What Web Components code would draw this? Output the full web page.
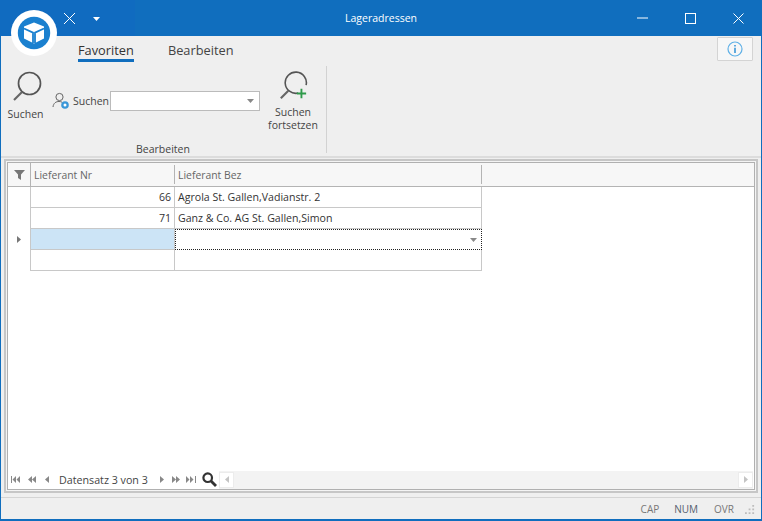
<!DOCTYPE html>
<html lang="de">
<head>
<meta charset="utf-8">
<title>Lageradressen</title>
<style>
html,body{margin:0;padding:0;width:762px;height:521px;overflow:hidden;background:#efefef}
body{font-family:"Open Sans","Noto Sans","Liberation Sans",sans-serif;font-size:10px}
</style>
</head>
<body>
<app-window>
  <title-bar title-text="Lageradressen"></title-bar>
  <ribbon-bar></ribbon-bar>
  <data-grid></data-grid>
  <status-bar></status-bar>
</app-window>
<script>
function def(name, html){
  customElements.define(name, class extends HTMLElement{
    constructor(){super();this.attachShadow({mode:'open'}).innerHTML=html;}
    connectedCallback(){
      const t=this.getAttribute('title-text');
      const el=this.shadowRoot.querySelector('[data-title]');
      if(t&&el)el.textContent=t;
    }
  });
}
def('app-window',`<style>
:host{display:flex;flex-direction:column;width:762px;height:521px;box-sizing:border-box;border:solid #106ebe;border-width:0 1px 2px 1px;background:#efefef;color:#444;position:relative}
</style><slot></slot>`);

def('title-bar',`<style>
:host{display:flex;align-items:center;height:36px;flex:none;background:linear-gradient(90deg,#106bc0 0,#106bc0 135px,#106ebe 135px);color:#fff;position:relative;margin:0 -1px}
.logo{position:absolute;left:11px;top:10px;width:46px;height:46px;z-index:3}
.qat{display:flex;align-items:center;position:absolute;left:63px;top:12px;gap:17px}
.title{flex:1;text-align:center;font-size:10.5px;line-height:36px}
.btns{position:absolute;right:0;top:0;display:flex}
.btns div{width:48px;height:36px;display:flex;align-items:center;justify-content:center}
svg{display:block}
</style>
<svg class="logo" viewBox="0 0 46 46"><circle cx="23" cy="23" r="23" fill="#fff"/><circle cx="23" cy="23" r="16.2" fill="#1a80cf"/>
<path d="M23 12.5 33 16.5V28.5L23 33.5 13 28.5V16.5Z" fill="#fff"/>
<path d="M13 18.5 22 22.6V33M33 18.5 24 22.6V33" fill="none" stroke="#1a80cf" stroke-width="1.8"/></svg>
<div class="qat">
<svg width="13" height="13" viewBox="0 0 13 13"><path d="M1 1 12 12M12 1 1 12" stroke="#fff" stroke-width="1" fill="none"/></svg>
<svg width="7" height="4" viewBox="0 0 7 4"><path d="M0 0H7L3.5 4Z" fill="#fff"/></svg>
</div>
<div class="title" data-title></div>
<div class="btns">
<div><svg width="11" height="2" viewBox="0 0 11 2"><path d="M0 1H11" stroke="#fff" stroke-width="1"/></svg></div>
<div><svg width="11" height="11" viewBox="0 0 11 11"><rect x=".5" y=".5" width="10" height="10" fill="none" stroke="#fff"/></svg></div>
<div><svg width="11" height="11" viewBox="0 0 11 11"><path d="M.5.5 10.5 10.5M10.5.5 .5 10.5" stroke="#fff" fill="none"/></svg></div>
</div>`);

def('ribbon-bar',`<style>
:host{display:block;flex:none;height:120px;border-bottom:2px solid #dcdcdc;box-sizing:content-box;position:relative}
.tabs{display:flex;height:30px;padding-left:77px;gap:34px;font-size:12.8px;color:#444}
.tab{padding-top:5px;height:21px;line-height:18px;box-sizing:content-box}
.tab.on{border-bottom:3px solid #106ebe;height:18px;color:#333}
.info{position:absolute;left:716px;top:1px;width:36px;height:24px;box-sizing:border-box;background:#f7f7f7;border:1px solid #d4d4d4;border-radius:1px;display:flex;align-items:center;justify-content:center}
.body{display:flex;height:87px}
.grp{display:flex;flex-direction:column;width:326px;border-right:1px solid #d2d2d2;box-sizing:border-box;height:87px}
.row{display:flex;height:66px;padding-top:5px;box-sizing:border-box}
.big{display:flex;flex-direction:column;align-items:center;font-size:10.5px;line-height:13px;color:#444}
.big svg{display:block;margin-bottom:5px}
.s1{width:51px}
.s1 div{margin-right:2px}
.mid{display:flex;align-items:center;height:22px;margin-top:19px;width:211px}
.mid span{margin:0 1px 0 3px;font-size:10.5px}
.combo{width:150px;height:20px;box-sizing:border-box;background:#fff;border:1px solid #bbb;display:flex;align-items:center;justify-content:flex-end;padding-right:5px}
.s2{width:60px;text-align:center}
.gl{text-align:center;font-size:10.5px;line-height:13px;margin-top:11px;color:#444;padding-right:1px}
svg{display:block}
</style>
<div class="tabs"><div class="tab on">Favoriten</div><div class="tab">Bearbeiten</div></div>
<div class="info"><svg width="16" height="16" viewBox="0 0 16 16"><circle cx="8" cy="8" r="7" fill="none" stroke="#5fb0e6" stroke-width="1.2"/><path d="M8 6.8V12M8 4V5.6" stroke="#3a97d8" stroke-width="1.6"/></svg></div>
<div class="body"><div class="grp">
<div class="row">
<div class="big s1"><svg width="32" height="32" viewBox="0 0 32 32"><circle cx="18.5" cy="12.5" r="11" fill="none" stroke="#555" stroke-width="1.7"/><path d="M11 21 3 29" stroke="#666" stroke-width="2.2"/></svg><div>Suchen</div></div>
<div class="mid"><svg width="18" height="18" viewBox="0 0 18 18"><circle cx="7.500" cy="5" r="3.600" fill="none" stroke="#666" stroke-width="1"/><path d="M1 15C1.500 11 4 9.500 7 9.500 8 9.500 9 9.700 10 10.200" fill="none" stroke="#666" stroke-width="1"/><circle cx="13" cy="13" r="3.800" fill="#3a97d8"/><circle cx="13" cy="13" r="1.500" fill="#fff"/></svg><span>Suchen</span><div class="combo"><svg width="7" height="4" viewBox="0 0 7 4"><path d="M0 0H7L3.500 4Z" fill="#888"/></svg></div></div>
<div class="big s2"><svg width="32" height="32" viewBox="0 0 32 32"><path d="M21.500 23.500A11.300 11.300 0 1 1 30 15" fill="none" stroke="#555" stroke-width="1.700"/><path d="M11 21 3 29" stroke="#666" stroke-width="2.200"/><path d="M25 19V29M20 24H30" stroke="#2f9a4a" stroke-width="2"/></svg><div>Suchen<br>fortsetzen</div></div>
</div>
<div class="gl">Bearbeiten</div>
</div></div>`);

def('data-grid',`<style>
:host{display:flex;flex-direction:column;flex:1;min-height:0;margin:1px 3px 4px 3px;border:2px solid #c6c6c6;background:#f4f4f4;padding:1px;box-sizing:border-box;font-size:10.6px;color:#444;position:relative}
.inner{flex:1;min-height:0;display:flex;flex-direction:column;border:1px solid #b0b0b0;background:#fff}
.table{flex:1;min-height:0}
.hdr{display:flex;height:24px;background:#f7f7f7;border-bottom:1px solid #b4b4b4;box-sizing:border-box;color:#666;font-size:10.4px}
.hc{display:flex;align-items:center;box-sizing:border-box;border-right:1px solid #b4b4b4;height:19px;margin-top:2px;padding-left:3px}
.ind{width:23px;justify-content:center;padding:0;height:23px;margin:0;border-right:1px solid #b4b4b4}
.c1{width:144px}.c2{width:307px}
.r{display:flex;height:21px;box-sizing:border-box}
.i{width:23px;display:flex;align-items:center;justify-content:center;border-right:1px solid #c8c8c8;box-sizing:border-box}
.d{border-right:1px solid #c8c8c8;border-bottom:1px solid #c8c8c8;box-sizing:border-box;display:flex;align-items:center;padding:0 3px;color:#333}
.n{justify-content:flex-end}
.sel{background:#cce4f6}
.ed{border:1px dotted #222;justify-content:flex-end;padding-right:4px}
.nav{display:flex;align-items:center;height:20px;margin-top:auto;color:#444}
.np{display:flex;align-items:center;width:211px;flex:none;box-sizing:border-box;padding-left:3px;height:20px}
.np svg{flex:none}
.np span{margin:1px 12px 0 10px;font-size:10.7px;white-space:nowrap}
.sb{flex:1;height:18px;margin:1px 1px 0 0;background:#f3f3f3;display:flex;justify-content:space-between}
.sb div{width:15px;height:16px;margin-top:1px;background:#fff;border:1px solid #ececec;box-sizing:border-box;display:flex;align-items:center;justify-content:center}
svg{display:block}
</style>
<div class="inner">
<div class="table">
<div class="hdr">
<div class="hc ind"><svg width="11" height="10" viewBox="0 0 11 10"><path d="M0 0H11L7 4.500V10L4 8V4.500Z" fill="#777"/></svg></div>
<div class="hc c1">Lieferant Nr</div><div class="hc c2">Lieferant Bez</div></div>
<div class="r"><div class="i"></div><div class="d c1 n">66</div><div class="d c2">Agrola St. Gallen,Vadianstr. 2</div></div>
<div class="r"><div class="i"></div><div class="d c1 n">71</div><div class="d c2">Ganz &amp; Co. AG St. Gallen,Simon</div></div>
<div class="r"><div class="i"><svg width="4" height="7" viewBox="0 0 4 7"><path d="M0 0 4 3.500 0 7Z" fill="#777"/></svg></div><div class="d c1 sel"></div><div class="d c2 ed"><svg width="7" height="4" viewBox="0 0 7 4"><path d="M0 0H7L3.500 4Z" fill="#888"/></svg></div></div>
<div class="r"><div class="i"></div><div class="d c1"></div><div class="d c2"></div></div>
</div>
<div class="nav">
<div class="np">
<svg width="9" height="7" viewBox="0 0 9 7" style="margin-right:8px"><path d="M0 0H1V7H0ZM5 0V7L1.500 3.500ZM9 0V7L5.500 3.500Z" fill="#888"/></svg>
<svg width="8" height="7" viewBox="0 0 8 7" style="margin-right:9px"><path d="M4 0V7L0 3.500ZM8 0V7L4 3.500Z" fill="#888"/></svg>
<svg width="4" height="7" viewBox="0 0 4 7"><path d="M4 0V7L0 3.500Z" fill="#888"/></svg>
<span>Datensatz 3 von 3</span>
<svg width="4" height="7" viewBox="0 0 4 7" style="margin-right:8px"><path d="M0 0V7L4 3.500Z" fill="#888"/></svg>
<svg width="8" height="7" viewBox="0 0 8 7" style="margin-right:6px"><path d="M0 0V7L4 3.500ZM4 0V7L8 3.500Z" fill="#888"/></svg>
<svg width="10" height="7" viewBox="0 0 10 7" style="margin-right:6px"><path d="M0 0V7L3.500 3.500ZM4 0V7L7.500 3.500ZM9 0H10V7H9Z" fill="#888"/></svg>
<svg width="15" height="15" viewBox="0 0 15 15"><circle cx="5.700" cy="5.700" r="4.300" fill="none" stroke="#333" stroke-width="2.200"/><path d="M9 9 14 14" stroke="#333" stroke-width="2.800"/></svg>
</div>
<div class="sb"><div><svg width="4" height="7" viewBox="0 0 4 7"><path d="M4 0V7L0 3.500Z" fill="#c4c4c4"/></svg></div><div><svg width="4" height="7" viewBox="0 0 4 7"><path d="M0 0V7L4 3.500Z" fill="#c4c4c4"/></svg></div></div>
</div>
</div>`);

def('status-bar',`<style>
:host{display:flex;flex:none;height:22px;align-items:center;justify-content:flex-end;border-top:1px solid #d4d4d4;font-size:10px;color:#777;box-sizing:border-box;position:relative;padding:1px 6px 0 0}
span{margin-right:15px}
.on{color:#55606e;margin-right:16px}
svg{display:block}
</style>
<span>CAP</span><span class="on">NUM</span><span style="margin-right:11px">OVR</span>
<svg width="10" height="10" viewBox="0 0 11 11"><path d="M8 1h2v2H8zM4 5h2v2H4zM8 5h2v2H8zM0 9h2v2H0zM4 9h2v2H4zM8 9h2v2H8z" fill="#bdbdbd"/></svg>`);
</script>
</body>
</html>
